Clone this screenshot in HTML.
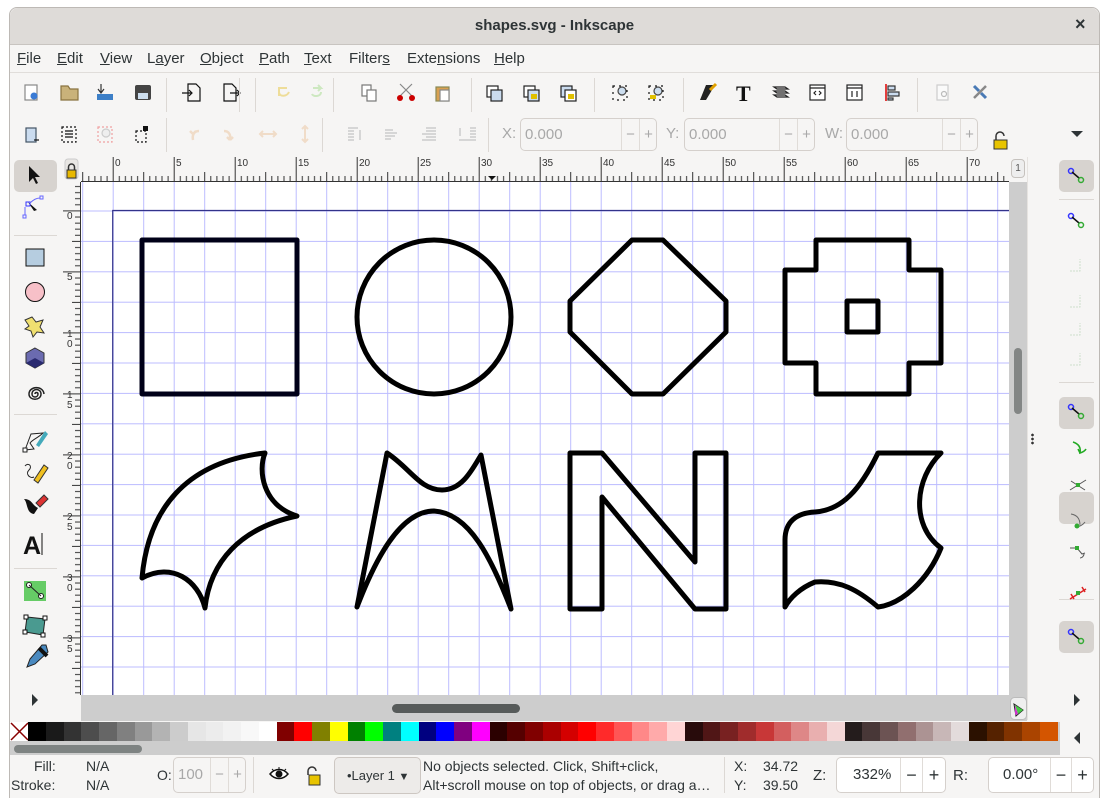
<!DOCTYPE html>
<html><head><meta charset="utf-8"><style>
*{margin:0;padding:0;box-sizing:border-box}
html,body{width:1109px;height:805px;overflow:hidden}
body{background:#fff;position:relative;font-family:"Liberation Sans","DejaVu Sans",sans-serif;font-size:14px;color:#2e3436}
.a{position:absolute}
#win{left:9px;top:7px;width:1091px;height:791px;border:1px solid #bdb9b5;border-radius:8px 8px 0 0;background:#f6f5f4;overflow:hidden}
.fld{position:absolute;border:1px solid #d5d0cc;border-radius:5px;background:#f6f5f4;height:33px;color:#a8a8a8;font-size:15px;line-height:31px;padding-left:4px}
.fld i{position:absolute;top:0;width:18px;height:31px;border-left:1px solid #e0dcd8;text-align:center;font-style:normal}
.lbl{position:absolute;color:#a8a8a8;font-size:15px}
.sep{position:absolute;width:1px;background:#dcd8d4}
.pr{position:absolute;background:#d7d3cf;border-radius:5px}
.pal b{flex:0 0 17.75px;display:block}
</style></head><body>
<div id="win" class="a"></div>
<div class="a" style="left:10px;top:8px;width:1089px;height:37px;background:#dedbd8;border-bottom:1px solid #c8c4c0;border-radius:8px 8px 0 0"></div>
<div class="a" style="left:0;width:1109px;top:17px;text-align:center;font-weight:bold;font-size:15px;color:#2e3436">shapes.svg - Inkscape</div>
<div class="a" style="left:1075px;top:14px;font-size:18px;font-weight:bold">×</div>
<div class="a" style="left:10px;top:45px;width:1089px;height:28px;border-bottom:1px solid #e0ddda"></div>
<div class="a" style="top:50px;left:17px;font-size:15px">
<span class="a" style="left:0"><u>F</u>ile</span><span class="a" style="left:40px"><u>E</u>dit</span><span class="a" style="left:83px"><u>V</u>iew</span><span class="a" style="left:130px">L<u>a</u>yer</span><span class="a" style="left:183px"><u>O</u>bject</span><span class="a" style="left:242px"><u>P</u>ath</span><span class="a" style="left:287px"><u>T</u>ext</span><span class="a" style="left:332px">Filter<u>s</u></span><span class="a" style="left:390px;white-space:nowrap">Exte<u>n</u>sions</span><span class="a" style="left:477px"><u>H</u>elp</span></div>
<svg class="a" style="left:0;top:74px" width="1109" height="80">
<g stroke="#555" fill="none" stroke-width="1.2">
<rect x="25" y="11" width="12" height="15" fill="#fff" stroke="#888"/><circle cx="34" cy="22" r="3.5" fill="#3a7bd5" stroke="none"/>
<path d="M61 12h7l2 3h8v11H61z" fill="#c9b27a" stroke="#8a7440"/>
<path d="M101 10v8M98 15l3 4 3-4" stroke="#333"/><rect x="97" y="20" width="16" height="6" fill="#3d7fc7" stroke="none"/>
<rect x="135" y="11" width="16" height="15" rx="2" fill="#444" stroke="none"/><rect x="138" y="19" width="10" height="6" fill="#cde" stroke="none"/>
<path d="M188 10h8l4 4v13h-12zM182 19h10M189 16l3 3-3 3" stroke="#111"/>
<path d="M224 10h8l4 4v13h-12zM230 19h10M237 16l3 3-3 3" stroke="#111"/>
<path d="M287 14h-8v8M279 14l5 0M279 18c0 5 8 5 10 0" stroke="#eedd99" stroke-width="2"/>
<path d="M313 14h8l-3-3M321 14l-3 3M321 18c0 5-8 5-9 2" stroke="#cde8c0" stroke-width="2"/>
<rect x="362" y="11" width="9" height="11" fill="#fff" stroke="#777"/><rect x="367" y="16" width="9" height="11" fill="#fff" stroke="#777"/>
<path d="M400 10l12 12M412 10l-12 12" stroke="#888"/><circle cx="400" cy="24" r="3" fill="#c00" stroke="none"/><circle cx="412" cy="24" r="3" fill="#c00" stroke="none"/>
<rect x="436" y="13" width="13" height="14" fill="#d9a050" stroke="#885"/><rect x="440" y="16" width="9" height="11" fill="#fff" stroke="#888"/>
<rect x="487" y="12" width="11" height="11" fill="#fff" stroke="#222"/><rect x="491" y="16" width="11" height="11" fill="#cbdcef" stroke="#222"/>
<rect x="524" y="12" width="11" height="11" fill="#fff" stroke="#222"/><rect x="528" y="16" width="11" height="11" fill="#cbdcef" stroke="#222"/><rect x="531" y="20" width="6" height="5" fill="#e0c000" stroke="none"/>
<rect x="561" y="12" width="11" height="11" fill="#cbdcef" stroke="#222"/><rect x="565" y="16" width="11" height="11" fill="#fff" stroke="#222"/><rect x="568" y="20" width="6" height="5" fill="#e0c000" stroke="none"/>
<rect x="613" y="12" width="14" height="14" stroke="#111" stroke-dasharray="2 4"/><circle cx="622" cy="17" r="4" fill="#cde" stroke="#444"/>
<rect x="649" y="12" width="14" height="14" stroke="#111" stroke-dasharray="2 4"/><circle cx="658" cy="17" r="4" fill="#cde" stroke="#444"/><rect x="650" y="21" width="6" height="4" fill="#e0c000" stroke="none"/>
<path d="M700 26l6-15h9l-9 15z" fill="#222" stroke="none"/><path d="M710 16l6-6" stroke="#e0a000" stroke-width="3"/>
<text x="736" y="27" font-family="Liberation Serif" font-size="22" font-weight="bold" fill="#111" stroke="none">T</text>
<path d="M774 13h11l3 2-11 0zM774 17h11l3 2h-11zM774 21h11l3 2h-11z" stroke="#222"/>
<rect x="810" y="11" width="15" height="15" fill="#fff" stroke="#222"/><path d="M810 14h15M816 17l-2 2 2 2M819 17l2 2-2 2" stroke="#222"/>
<rect x="847" y="11" width="15" height="15" fill="#fff" stroke="#222"/><path d="M847 14h15M852 17v6M857 17v6" stroke="#222"/>
<path d="M886 10v17" stroke="#d00" stroke-width="1.5"/><rect x="888" y="12" width="7" height="4" fill="#cbdcef" stroke="#333"/><rect x="888" y="18" width="11" height="4" fill="#cbdcef" stroke="#333"/><rect x="888" y="24" width="5" height="2" fill="#cbdcef" stroke="#333"/>
<rect x="937" y="11" width="11" height="15" fill="#fafafa" stroke="#ccc"/><circle cx="944" cy="20" r="2.5" stroke="#bbb"/>
<path d="M974 12l5 5M981 19l5 5" stroke="#4a7ab5" stroke-width="3"/><path d="M986 12l-12 12" stroke="#888" stroke-width="2.5"/>
</g>
<g fill="#dcd8d4"><rect x="471" y="4" width="1" height="34"/><rect x="239" y="4" width="1" height="34"/><rect x="255" y="4" width="1" height="34"/><rect x="333" y="4" width="1" height="34"/><rect x="594" y="4" width="1" height="34"/><rect x="683" y="4" width="1" height="34"/><rect x="917" y="4" width="1" height="34"/><rect x="166" y="4" width="1" height="34"/><rect x="166" y="44" width="1" height="34"/><rect x="322" y="44" width="1" height="34"/><rect x="488" y="44" width="1" height="34"/></g>
<g stroke="#555" fill="none" stroke-width="1.2">
<rect x="26" y="54" width="10" height="14" fill="#cbdcef" stroke="#456"/><path d="M34 66h5" stroke="#111"/>
<rect x="62" y="53" width="14" height="15" stroke="#111" stroke-dasharray="2 2"/><path d="M65 57h8M65 60h8M65 63h8" stroke="#111"/>
<rect x="98" y="53" width="14" height="15" stroke="#f0a0a0" stroke-dasharray="2 2"/><circle cx="106" cy="59" r="4" fill="#eee" stroke="#ccc"/>
<rect x="136" y="57" width="10" height="11" stroke="#111" stroke-dasharray="2 2"/><rect x="143" y="52" width="5" height="5" fill="#111" stroke="none"/>
<path d="M199 57c-5 0-7 4-6 9M193 60l-3-3M193 60l3-3" stroke="#f0dcc8" stroke-width="2.5"/>
<path d="M224 57c5 0 7 4 6 9M230 66l-3-3M230 66l3-3" stroke="#f0dcc8" stroke-width="2.5"/>
<path d="M260 60h16M263 57l-3 3 3 3M273 57l3 3-3 3" stroke="#f0dcc8" stroke-width="2"/>
<path d="M305 52v16M302 55l3-3 3 3M302 65l3 3 3-3" stroke="#f0dcc8" stroke-width="2"/>
<path d="M348 54h10M348 57h6M348 60h6M348 63h6M348 66h6M360 56v10" stroke="#ccc" stroke-width="1.5"/>
<path d="M385 56h8M385 59h12M385 62h10M385 65h6" stroke="#ccc" stroke-width="1.5"/>
<path d="M426 54h10M426 57h10M422 60h14M426 63h10M422 66h14" stroke="#ccc" stroke-width="1.5"/>
<path d="M460 54v8M470 54h6M470 57h6M470 60h6M470 63h6M459 66h17" stroke="#ccc" stroke-width="1.5"/>
</g>
<path d="M994 66h13v9h-13z" fill="#e8c400" stroke="#333"/><path d="M996 66v-4a4 4 0 0 1 8 0" fill="none" stroke="#333" stroke-width="1.5"/>
<path d="M1071 57h12l-6 6z" fill="#2e3436"/>
</svg>
<span class="lbl" style="left:502px;top:125px">X:</span>
<div class="fld" style="left:520px;top:118px;width:137px">0.000<i style="left:100px">−</i><i style="left:118px">+</i></div>
<span class="lbl" style="left:666px;top:125px">Y:</span>
<div class="fld" style="left:684px;top:118px;width:131px">0.000<i style="left:94px">−</i><i style="left:112px">+</i></div>
<span class="lbl" style="left:825px;top:125px">W:</span>
<div class="fld" style="left:846px;top:118px;width:132px">0.000<i style="left:95px">−</i><i style="left:113px">+</i></div>

<div class="pr" style="left:14px;top:160px;width:43px;height:32px"></div>
<svg class="a" style="left:10px;top:155px" width="55" height="540">
<path d="M19 11v16l4-4 3 6 2-1-3-6h5z" fill="#111"/>
<path d="M18 47l9 8-3 1z" fill="#111"/><rect x="16" y="47" width="4" height="4" fill="none" stroke="#33f"/><rect x="13" y="60" width="3" height="3" fill="none" stroke="#66f"/><rect x="30" y="41" width="3" height="3" fill="none" stroke="#66f"/><path d="M15 60v-8M20 48c4-4 7-5 10-5" stroke="#66f" fill="none"/>
<rect x="16" y="94" width="18" height="17" fill="#b6cde0" stroke="#111"/>
<circle cx="25" cy="137" r="9.5" fill="#f7c0c8" stroke="#111"/>
<path d="M15 165l7-3 4 5 7-2-3 7 4 6-7-1-4 5-2-6-6-2 4-3z" fill="#f0e070" stroke="#333"/>
<path d="M25 193l9 5v10l-9 5-9-5v-10z" fill="#6b6bb0" stroke="#333"/><path d="M25 203l9 5-9 5-9-5z" fill="#2a2a70"/>
<path d="M25 239c0-2 3-2 3 0 0 4-6 4-6 0 0-6 9-6 9 0 0 7-12 7-12 0 0-8 14-9 15 0" fill="none" stroke="#222" stroke-width="1.5"/>
<path d="M15 295l6-16 12-1c-5 5-10 6-13 10l4 6z" fill="none" stroke="#222"/><path d="M26 290l9-14 3 3-9 13z" fill="#4ab"/><rect x="13" y="293" width="4" height="4" fill="#fff" stroke="#222"/>
<path d="M15 311c3-4 8 0 4 4 -4 4 1 9 5 7" fill="none" stroke="#222"/><path d="M24 325l10-15 4 3-10 15z" fill="#f0c020" stroke="#333"/>
<path d="M14 344c4 4 2 14 10 15l4-6c-6-3-6-9-14-9z" fill="#111"/><path d="M26 348l8-8 4 4-8 8z" fill="#d33" stroke="#333"/>
<text x="13" y="399" font-family="Liberation Sans" font-weight="bold" font-size="25" fill="#111">A</text><path d="M32 378v22" stroke="#111"/>
<rect x="14" y="426" width="22" height="20" fill="#6c6"/><circle cx="19" cy="430" r="2.5" fill="#fff" stroke="#222"/><circle cx="31" cy="441" r="2.5" fill="#fff" stroke="#222"/><path d="M19 430l12 11" stroke="#222"/>
<path d="M17 462l18 2-2 16-18-3z" fill="#4a9a90" stroke="#222"/><g fill="#fff" stroke="#111"><rect x="14" y="460" width="4" height="4"/><rect x="33" y="461" width="4" height="4"/><rect x="31" y="478" width="4" height="4"/><rect x="13" y="475" width="4" height="4"/></g>
<path d="M36 490l-4 0-12 14-3 8 8-3 13-12z" fill="#4a8ac0" stroke="#222"/><path d="M29 493l8 8" stroke="#111" stroke-width="4"/>
</svg>
<div class="sep" style="left:14px;top:235px;width:43px;height:1px"></div>
<div class="sep" style="left:14px;top:414px;width:43px;height:1px"></div>
<div class="sep" style="left:14px;top:568px;width:43px;height:1px"></div>
<svg class="a" style="left:30px;top:693px" width="10" height="14"><path d="M2 1l6 6-6 6z" fill="#2e3436"/></svg>

<svg class="a" style="left:63px;top:157px" width="947" height="538">
<defs>
<pattern id="tx" x="49.7" y="0" width="61" height="25" patternUnits="userSpaceOnUse">
<path d="M0.5 0v25M6.6 19v6M12.7 19v6M18.8 19v6M24.9 19v6M31 15v10M37.1 19v6M43.2 19v6M49.3 19v6M55.4 19v6" stroke="#333" stroke-width="1"/></pattern>
<pattern id="ty" x="0" y="-7.6" width="18" height="61" patternUnits="userSpaceOnUse">
<path d="M0 0.5h18M12 6.6h6M12 12.7h6M12 18.8h6M12 24.9h6M9 31h9M12 37.1h6M12 43.2h6M12 49.3h6M12 55.4h6" stroke="#333" stroke-width="1"/></pattern>
<pattern id="g" x="49.7" y="-7.3" width="30.5" height="30.4" patternUnits="userSpaceOnUse">
<path d="M0.5 0v31M0 0.5h31" stroke="#bcbcff" stroke-width="1"/></pattern>
</defs>
<rect x="18" y="0" width="929" height="25" fill="#f6f5f4"/>
<rect x="18" y="0" width="929" height="25" fill="url(#tx)"/>
<path d="M18 24.5h929" stroke="#333"/>
<rect x="0" y="25" width="18" height="513" fill="#f6f5f4"/>
<rect x="0" y="25" width="18" height="513" fill="url(#ty)"/>
<path d="M17.5 25v513" stroke="#333"/>
<rect x="18" y="25" width="929" height="513" fill="#fff"/>
<rect x="18" y="25" width="929" height="513" fill="url(#g)"/>
<path d="M49.7 1000V53.5H947" stroke="#33338a" fill="none" stroke-width="1.2"/>
<path d="M425 19h8l-4 4z" fill="#111"/>
<g font-family="Liberation Sans" font-size="10" fill="#333">
<text x="52" y="9">0</text><text x="113" y="9">5</text><text x="174" y="9">10</text><text x="235" y="9">15</text><text x="296" y="9">20</text><text x="357" y="9">25</text><text x="418" y="9">30</text><text x="479" y="9">35</text><text x="540" y="9">40</text><text x="601" y="9">45</text><text x="662" y="9">50</text><text x="723" y="9">55</text><text x="784" y="9">60</text><text x="845" y="9">65</text><text x="906" y="9">70</text>
<text x="4" y="62">0</text><text x="4" y="123">5</text><text x="4" y="180">1</text><text x="4" y="190">0</text><text x="4" y="241">1</text><text x="4" y="251">5</text><text x="4" y="302">2</text><text x="4" y="312">0</text><text x="4" y="363">2</text><text x="4" y="373">5</text><text x="4" y="424">3</text><text x="4" y="434">0</text><text x="4" y="485">3</text><text x="4" y="495">5</text>
</g>
<rect x="0" y="0" width="18" height="25" fill="#f6f5f4"/>
<rect x="2" y="2" width="13" height="20" rx="3" fill="#e8e6e3" stroke="#ccc"/>
<path d="M4 13h9v8H4z" fill="#e8b800" stroke="#333"/><path d="M5.5 13v-3a3 3 0 0 1 6 0v3" fill="none" stroke="#333" stroke-width="1.5"/>
<g transform="translate(-63 -157)" fill="none" stroke="#000" stroke-width="5" stroke-linejoin="round">
<rect x="142" y="240" width="155" height="154" stroke="#000018"/>
<circle cx="434" cy="317" r="77"/>
<path d="M632 240H663L726 301V332L663 394H632L570 332V301Z"/>
<path d="M816 240H909V270H941V363H909V394H816V363H785V270H816Z"/>
<path d="M847 301H878V332H847Z"/>
<path d="M142 578C148 510 185 462 265 453C258 470 262 505 297 516C240 528 210 562 205 608C198 580 172 562 142 578Z"/>
<path d="M357 607L387 453C410 468 420 490 442 490C462 490 472 470 481 455L511 609C492 560 470 513 434 511C400 511 375 560 357 607Z"/>
<path d="M570 453H602L695 562V453H726V609H695L602 497V609H570Z"/>
<path d="M878 453H941C915 478 910 525 941 548C928 580 902 604 878 607C858 590 840 580 815 582C800 588 790 598 785 607V540C785 522 796 513 815 512C842 510 860 490 878 453Z"/>
</g>
</svg>
<div class="a" style="left:1009px;top:182px;width:18px;height:513px;background:#cdcdcd"></div>
<div class="a" style="left:1014px;top:348px;width:8px;height:66px;background:#838685;border-radius:4px"></div>
<div class="a" style="left:1009px;top:157px;width:18px;height:25px;background:#f6f5f4"></div>
<div class="a" style="left:1011px;top:159px;width:14px;height:19px;border:1px solid #c6c2be;border-radius:4px;background:#eee;font-size:10px;text-align:center;line-height:17px;color:#555">1</div>
<div class="a" style="left:81px;top:695px;width:928px;height:26px;background:#cdcdcd"></div>
<div class="a" style="left:392px;top:704px;width:128px;height:9px;background:#575b5a;border-radius:5px"></div>
<div class="a" style="left:1009px;top:695px;width:18px;height:26px;background:#cdcdcd"></div>
<svg class="a" style="left:1010px;top:697px" width="18" height="24"><rect x="0.5" y="0.5" width="16" height="22" rx="4" fill="#efefef" stroke="#bbb"/><path d="M4 7l9 6-7 6z" fill="#fff" stroke="#222"/><path d="M5 8l3 9 5-4z" fill="#4c4"/><path d="M5 8l3 9-3 1z" fill="#c3c"/></svg>
<div class="a" style="left:1027px;top:157px;width:72px;height:563px;background:#f6f5f4;border-left:1px solid #e6e3e0"></div>
<div class="a" style="left:1031px;top:433px;width:3px;height:12px;background:radial-gradient(circle,#333 1.2px,transparent 1.5px) 0 0/3px 4px"></div>
<div class="pr" style="left:1059px;top:160px;width:35px;height:32px"></div>
<div class="pr" style="left:1059px;top:397px;width:35px;height:32px"></div>
<div class="pr" style="left:1059px;top:492px;width:35px;height:32px"></div>
<div class="pr" style="left:1059px;top:621px;width:35px;height:32px"></div>
<div class="sep" style="left:1059px;top:199px;width:35px;height:1px"></div>
<div class="sep" style="left:1059px;top:382px;width:35px;height:1px"></div>
<div class="sep" style="left:1059px;top:599px;width:35px;height:1px"></div>
<svg class="a" style="left:1060px;top:157px" width="35" height="500">
<g id="cn"><circle cx="11" cy="14" r="2.5" fill="none" stroke="#33f" stroke-width="1.5"/><path d="M12 15l7 6" stroke="#111" stroke-width="1.5"/><circle cx="21" cy="23" r="2.5" fill="none" stroke="#3a3" stroke-width="1.5"/></g>
<use href="#cn" y="45"/><use href="#cn" y="236"/><use href="#cn" y="461"/>
<g stroke="#cde0cd" fill="none" stroke-dasharray="2 1"><path d="M10 114h10v-12"/><path d="M10 150h10v-12"/><path d="M10 178h10v-12"/><path d="M10 208h10v-12"/></g>
<path d="M13 285c6 2 8 6 7 11 3-1 5-2 6-4M20 296l-2-4" stroke="#2a2" fill="none" stroke-width="1.5"/>
<path d="M10 333l16-10M11 324l14 9" stroke="#555"/><rect x="16" y="326" width="4" height="4" fill="#3a3"/>
<path d="M11 357c6 1 9 5 9 11M15 370c4 0 8-2 10-5" stroke="#666" fill="none"/><circle cx="17" cy="369" r="2.5" fill="#3a3"/>
<path d="M10 391h7l5 6 3-1M20 401c2 0 4-2 4-4" stroke="#555" fill="none"/><rect x="15" y="389" width="4" height="4" fill="#3a3"/>
<path d="M10 442l16-10M11 437l3 5M22 430l3 5" stroke="#d22" stroke-width="1.5"/><rect x="16" y="434" width="4" height="4" fill="#3a3"/>
</svg>
<svg class="a" style="left:1072px;top:693px" width="10" height="14"><path d="M2 1l6 6-6 6z" fill="#2e3436"/></svg>
<svg class="a" style="left:1072px;top:731px" width="10" height="14"><path d="M8 1l-6 6 6 6z" fill="#2e3436"/></svg>
<svg class="a" style="left:10px;top:722px" width="1050" height="33">
<rect x="0" y="0" width="1050" height="33" fill="#cdcdcd"/>
<rect x="0" y="0" width="18" height="19" fill="#fff"/><path d="M1 1l17 17M18 1L1 18" stroke="#800" stroke-width="1.5"/>
<rect x="4" y="23" width="128" height="8" rx="4" fill="#7e8382"/>
</svg>
<div class="a pal" style="left:28px;top:722px;height:19px;width:1030px;display:flex;overflow:hidden">
<b style="background:#000"></b><b style="background:#1a1a1a"></b><b style="background:#333"></b><b style="background:#4d4d4d"></b><b style="background:#666"></b><b style="background:#808080"></b><b style="background:#999"></b><b style="background:#b3b3b3"></b><b style="background:#ccc"></b><b style="background:#e6e6e6"></b><b style="background:#ececec"></b><b style="background:#f2f2f2"></b><b style="background:#f8f8f8"></b><b style="background:#fff"></b><b style="background:#800000"></b><b style="background:#f00"></b><b style="background:#808000"></b><b style="background:#ff0"></b><b style="background:#008000"></b><b style="background:#0f0"></b><b style="background:#008080"></b><b style="background:#0ff"></b><b style="background:#000080"></b><b style="background:#00f"></b><b style="background:#800080"></b><b style="background:#f0f"></b><b style="background:#2b0000"></b><b style="background:#500"></b><b style="background:#800000"></b><b style="background:#a00"></b><b style="background:#d40000"></b><b style="background:#f00"></b><b style="background:#ff2a2a"></b><b style="background:#f55"></b><b style="background:#f88"></b><b style="background:#faa"></b><b style="background:#ffd5d5"></b><b style="background:#280b0b"></b><b style="background:#501616"></b><b style="background:#782121"></b><b style="background:#a02c2c"></b><b style="background:#c83737"></b><b style="background:#d35f5f"></b><b style="background:#de8787"></b><b style="background:#e9afaf"></b><b style="background:#f4d7d7"></b><b style="background:#241c1c"></b><b style="background:#483737"></b><b style="background:#6c5353"></b><b style="background:#916f6f"></b><b style="background:#ac9393"></b><b style="background:#c8b7b7"></b><b style="background:#e3dbdb"></b><b style="background:#2b1100"></b><b style="background:#520"></b><b style="background:#803300"></b><b style="background:#a40"></b><b style="background:#d45500"></b><b style="background:#f60"></b>
</div>
<div class="a" style="left:10px;top:755px;width:1089px;height:43px;background:#f6f5f4;font-size:14px">
<span class="a" style="left:24px;top:3px">Fill:</span><span class="a" style="left:76px;top:3px">N/A</span>
<span class="a" style="left:1px;top:22px">Stroke:</span><span class="a" style="left:76px;top:22px">N/A</span>
<span class="a" style="left:147px;top:12px">O:</span>
<div class="fld" style="left:163px;top:2px;width:73px;height:36px;line-height:34px;font-size:15px">100<i style="left:36px;height:34px">−</i><i style="left:54px;height:34px">+</i></div>
<div class="sep" style="left:243px;top:2px;height:36px"></div>
<svg class="a" style="left:258px;top:10px" width="70" height="24"><path d="M2 9c5-6 13-6 18 0-5 6-13 6-18 0z" fill="#fff" stroke="#111" stroke-width="1.5"/><circle cx="11" cy="9" r="3.5" fill="#111"/><path d="M4 4l2 2M11 2v3M18 4l-2 2" stroke="#111"/>
<path d="M41 10h11v10H41z" fill="#e8c400" stroke="#333"/><path d="M40 10v-4a4 4 0 0 1 8 0" fill="none" stroke="#333" stroke-width="1.5"/></svg>
<div class="a" style="left:324px;top:2px;width:87px;height:37px;border:1px solid #cdc7c2;border-radius:5px;background:#edebe9;font-size:13px;line-height:35px;padding-left:12px">•Layer 1 <span style="font-size:11px">▼</span></div>
<span class="a" style="left:413px;top:3px;white-space:nowrap">No objects selected. Click, Shift+click,</span>
<span class="a" style="left:413px;top:22px;white-space:nowrap">Alt+scroll mouse on top of objects, or drag a…</span>
<div class="sep" style="left:714px;top:2px;height:36px"></div>
<span class="a" style="left:724px;top:3px">X:</span><span class="a" style="left:753px;top:3px">34.72</span>
<span class="a" style="left:724px;top:22px">Y:</span><span class="a" style="left:753px;top:22px">39.50</span>
<span class="a" style="left:803px;top:12px;font-size:15px">Z:</span>
<div class="fld" style="left:826px;top:2px;width:110px;height:36px;line-height:34px;background:#fff;color:#2e3436;padding-left:16px">332%<i style="left:63px;height:34px;font-size:18px;width:22px">−</i><i style="left:85px;height:34px;width:23px;font-size:18px">+</i></div>
<span class="a" style="left:943px;top:12px;font-size:15px">R:</span>
<div class="fld" style="left:978px;top:2px;width:106px;height:36px;line-height:34px;background:#fff;color:#2e3436;padding-left:14px">0.00°<i style="left:61px;height:34px;font-size:18px;width:21px">−</i><i style="left:82px;height:34px;width:22px;font-size:18px">+</i></div>
</div>
<div class="a" style="left:10px;top:754px;width:1050px;height:1px;background:#cdcdcd"></div>
</body></html>
